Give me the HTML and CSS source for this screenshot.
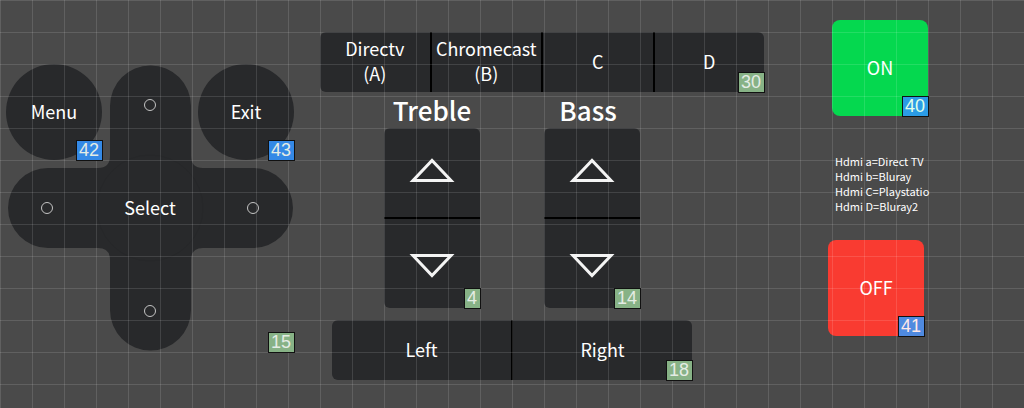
FILE: index.html
```html
<!DOCTYPE html>
<html lang="en">
<head>
<meta charset="utf-8">
<title>Remote control panel</title>
<link rel="stylesheet" href="styles.css">
</head>
<body>
<main class="panel">
  <section class="nav" aria-label="Navigation">
    <svg class="nav-shape" viewBox="0 0 288 288" aria-hidden="true">
      <path d="M104 42a40.500 40.500 0 0 1 81 0V92q0 12 12 12H247a40 40 0 0 1 0 80H197q-12 0-12 12V246a40.500 40.500 0 0 1-81 0V196q0-12-12-12H42a40 40 0 0 1 0-80H92q12 0 12-12Z" fill="#28292b"/>
      <circle cx="144" cy="144" r="53" fill="none" stroke="#262729"/>
    </svg>
    <div class="cell menu"><button class="key round">Menu</button><span class="badge blue">42</span></div>
    <button class="arm up" aria-label="Up"><span class="dot"></span></button>
    <div class="cell exit"><button class="key round">Exit</button><span class="badge blue">43</span></div>
    <button class="arm left" aria-label="Left"><span class="dot"></span></button>
    <button class="arm select">Select</button>
    <button class="arm right" aria-label="Right"><span class="dot"></span></button>
    <button class="arm down" aria-label="Down"><span class="dot"></span></button>
    <span class="badge">15</span>
  </section>

  <section class="center" aria-label="Audio and sources">
    <div class="bar">
      <button class="key">Directv<br>(A)</button>
      <button class="key">Chromecast<br>(B)</button>
      <button class="key">C</button>
      <button class="key">D</button>
      <span class="badge">30</span>
    </div>
    <div class="tones">
      <div class="tone">
        <h2 class="title">Treble</h2>
        <div class="rocker">
          <button class="key" aria-label="Treble up"><svg class="arrow" viewBox="0 0 46 26"><path d="M4 23.500H42L23 3.500Z"/></svg></button>
          <button class="key" aria-label="Treble down"><svg class="arrow" viewBox="0 0 46 26"><path d="M4 2.500H42L23 22.500Z"/></svg></button>
          <span class="badge">4</span>
        </div>
      </div>
      <div class="tone">
        <h2 class="title bass">Bass</h2>
        <div class="rocker">
          <button class="key" aria-label="Bass up"><svg class="arrow" viewBox="0 0 46 26"><path d="M4 23.500H42L23 3.500Z"/></svg></button>
          <button class="key" aria-label="Bass down"><svg class="arrow" viewBox="0 0 46 26"><path d="M4 2.500H42L23 22.500Z"/></svg></button>
          <span class="badge">14</span>
        </div>
      </div>
    </div>
    <div class="bar balance">
      <button class="key">Left</button>
      <button class="key">Right</button>
      <span class="badge">18</span>
    </div>
  </section>

  <section class="power" aria-label="Power">
    <div class="cell on"><button class="key switch green">ON</button><span class="badge sky">40</span></div>
    <p class="notes">Hdmi a=Direct TV<br>Hdmi b=Bluray<br>Hdmi C=Playstatio<br>Hdmi D=Bluray2</p>
    <div class="cell off"><button class="key switch red">OFF</button><span class="badge violet">41</span></div>
  </section>
</main>
</body>
</html>
```
FILE: styles.css
```css
* { box-sizing: border-box; }

body {
  margin: 0;
  background: #4a4a4a;
  color: #fff;
  font: 18px/25px "Noto Sans CJK SC", "Noto Sans", sans-serif;
}

.panel {
  position: relative;
  display: grid;
  grid-template-columns: 288px minmax(0, 1fr) 100px;
  min-height: 100vh;
  padding: 0 96px 0 6px;
}

/* alignment grid drawn over the keys */
.panel::after {
  content: "";
  position: absolute;
  inset: 0;
  pointer-events: none;
  background-image:
    linear-gradient(to right, rgba(255, 255, 255, 0.12) 1px, transparent 1px),
    linear-gradient(to bottom, rgba(255, 255, 255, 0.12) 1px, transparent 1px);
  background-size: 32px 32px;
}

button {
  margin: 0;
  padding: 0 0 2px;
  border: 0;
  background: none;
  color: inherit;
  font: inherit;
  cursor: pointer;
}

.key { background: #28292b; }

.cell, .nav, .bar, .rocker { position: relative; }

.badge {
  position: absolute;
  right: -1px;
  bottom: -1px;
  z-index: 1;
  padding: 0 3px 0 2px;
  border: 1px solid #111;
  background: #87b286;
  color: #e4ece4;
  font: 18px/19px "Liberation Sans", Arial, sans-serif;
}
.badge.blue { background: #3489e6; }
.badge.sky { background: #2b9ce6; color: #e0ffe8; }
.badge.violet { background: #4f8ae0; color: #ffe8e8; }

/* navigation pad */
.nav {
  display: grid;
  grid-template: repeat(3, 96px) / repeat(3, 96px);
  align-self: start;
  margin-top: 64px;
}
.nav-shape { grid-area: 1 / 1 / 4 / 4; width: 100%; }
.arm {
  display: flex;
  align-items: center;
  justify-content: center;
}
.menu { grid-area: 1 / 1; }
.up { grid-area: 1 / 2; padding: 0 0 14px; }
.exit { grid-area: 1 / 3; }
.left { grid-area: 2 / 1; padding: 0 14px 0 0; }
.select { grid-area: 2 / 2; }
.right { grid-area: 2 / 3; padding: 0 0 0 14px; }
.down { grid-area: 3 / 2; padding: 14px 0 0; }
.round { width: 96px; height: 96px; border-radius: 50%; }
.dot {
  width: 12px;
  height: 12px;
  border: 1px solid #c4c4c4;
  border-radius: 50%;
}

/* sources, tone and balance */
.center { padding: 32px 64px 28px 26px; }
.bar {
  display: flex;
  height: 60px;
}
.bar .key { flex: 1 1 0; min-width: 0; }
.bar .key + .key { border-left: 2px solid #000; }
.bar .key:first-child { border-radius: 6px 0 0 6px; }
.bar .key:nth-last-child(2) { border-radius: 0 6px 6px 0; }
.tones {
  display: flex;
  gap: 64px;
  padding-left: 64px;
}
.tone { width: 96px; }
.title {
  margin: 0;
  font-size: 26px;
  font-weight: 500;
  line-height: 36px;
  text-align: center;
}
.bass { padding-right: 8px; }
.rocker {
  display: grid;
  grid-template-rows: 91px 89px;
}
.rocker .key { display: grid; place-items: center; }
.rocker .key:first-child {
  padding-bottom: 5px;
  border-bottom: 2px solid #000;
  border-radius: 6px 6px 0 0;
}
.rocker .key:nth-child(2) {
  padding: 5px 0 0;
  border-radius: 0 0 6px 6px;
}
.arrow {
  width: 46px;
  height: 26px;
  fill: none;
  stroke: #f4f4f4;
  stroke-width: 3;
}
.balance { margin: 12px 72px 0 12px; }

/* power column */
.power { padding-top: 20px; }
.on { width: 96px; margin-left: 4px; }
.off { width: 96px; }
.switch {
  display: block;
  width: 96px;
  height: 96px;
  border-radius: 8px;
}
.green { background: #05d84f; }
.red { background: #f93b31; }
.notes {
  margin: 38px 0 26px 7px;
  font-size: 11px;
  line-height: 15px;
  white-space: nowrap;
}
```
